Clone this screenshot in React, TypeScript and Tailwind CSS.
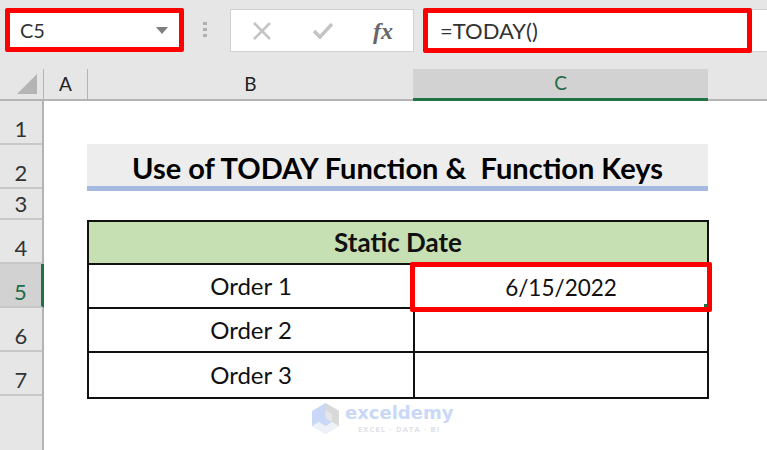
const rowHeads = [
  { label: "1", h: "h-[44px]" },
  { label: "2", h: "h-[44px]" },
  { label: "3", h: "h-[31px]" },
  { label: "4", h: "h-[44px]" },
  { label: "5", h: "h-[44px]", active: true },
  { label: "6", h: "h-[44px]" },
  { label: "7", h: "h-[44px]" },
];

const orders = ["Order 1", "Order 2", "Order 3"];

function Watermark() {
  return (
    <div className="absolute left-[312px] top-[403px] flex items-start gap-[6px]">
      <svg width="27" height="31" viewBox="0 0 27 31">
        <path d="M13.5 0 L27 8 V23 L13.5 31 L0 23 V8 Z" fill="#c9d8f7" />
        <path d="M13.5 0 L27 8 V23 L20 19 V11 L13.5 7 Z" fill="#d9d9d9" />
        <path d="M13.5 7 L20 11 V19 L13.5 15 Z" fill="#e6e6e6" />
        <path d="M0 23 L7 19 L13.5 23 L20 19 L27 23 L13.5 31 Z" fill="#eef2f8" />
      </svg>
      <div className="flex flex-col items-center">
        <span className="text-[18px] leading-[20px] font-bold text-[#c9d8f7] font-['DejaVu_Sans']">exceldemy</span>
        <span className="text-[7.5px] leading-[10px] mt-[1px] font-bold tracking-[1.2px] text-[#dde1e8] font-['Open_Sans']">EXCEL · DATA · BI</span>
      </div>
    </div>
  );
}

export default function App() {
  return (
    <div className="relative w-[767px] h-[450px] overflow-hidden bg-white font-['Lato',sans-serif] text-[#111]">
      {/* formula bar */}
      <div className="flex h-[69px] bg-[#e6e6e6] pt-[8px] items-start">
        <div className="ml-[5px] w-[179px] h-[44px] border-[5px] border-[#ff0000] rounded-[2px] bg-white flex items-center justify-between pl-[10px] pr-[11px]">
          <span className="text-[20px] text-[#333]">C5</span>
          <svg width="12" height="7" viewBox="0 0 12 7"><path d="M0 0 H12 L6 7 Z" fill="#7f7f7f" /></svg>
        </div>
        <div className="ml-[19px] mt-[14px] flex flex-col gap-[3px]">
          <div className="w-[4px] h-[3px] bg-[#b0b0b0]" />
          <div className="w-[4px] h-[3px] bg-[#b0b0b0]" />
          <div className="w-[4px] h-[3px] bg-[#b0b0b0]" />
        </div>
        <div className="ml-[23px] mt-[1px] w-[184px] h-[43px] bg-white border border-[#d2d2d2] flex items-center">
          <svg className="ml-[21px]" width="20" height="18" viewBox="0 0 20 18">
            <path d="M2 1 L18 17 M18 1 L2 17" stroke="#c4c4c4" strokeWidth="2.6" />
          </svg>
          <svg className="ml-[40px]" width="22" height="18" viewBox="0 0 22 18">
            <path d="M2 9 L8 15 L20 2" stroke="#c4c4c4" strokeWidth="3.4" fill="none" />
          </svg>
          <span className="ml-[39px] text-[24px] leading-none italic font-bold text-[#666] font-['Liberation_Serif']">fx</span>
        </div>
        <div className="ml-[9px] w-[329px] h-[45px] border-[5px] border-[#ff0000] rounded-[2px] bg-white flex items-center pl-[12px]">
          <span className="text-[22px] text-[#333]">=TODAY()</span>
        </div>
        <div className="flex-1 mt-[1px] h-[43px] bg-white border-y border-[#d2d2d2]" />
      </div>

      {/* column headers */}
      <div className="flex h-[32px] bg-[#e6e6e6] border-b-2 border-[#b4b4b4] text-[19px] text-[#222]">
        <div className="w-[44px] border-r border-[#b4b4b4] flex items-end justify-end pr-[6px] pb-[5px]">
          <svg width="20" height="20" viewBox="0 0 20 20"><path d="M20 0 V20 H0 Z" fill="#b4b4b4" /></svg>
        </div>
        <div className="w-[44px] border-r border-[#b4b4b4] flex items-center justify-center">A</div>
        <div className="w-[325px] flex items-center justify-center">B</div>
        <div className="w-[295px] bg-[#d2d2d2] border-b-[3px] border-[#217346] mb-[-2px] flex items-center justify-center text-[#216b47]">C</div>
        <div className="flex-1" />
      </div>

      {/* sheet */}
      <div className="flex">
        <div className="w-[44px] h-[349px] bg-[#e6e6e6] border-r-2 border-[#b4b4b4] flex flex-col text-[22px] text-[#333]">
          {rowHeads.map((r) => (
            <div
              key={r.label}
              className={`${r.h} shrink-0 border-b-2 border-[#c8c8c8] flex items-end justify-center leading-[29px] ${r.active ? "bg-[#d2d2d2] border-r-[3px] border-r-[#217346] mr-[-2px] text-[#216b47]" : ""}`}
            >
              {r.label}
            </div>
          ))}
        </div>

        <div className="pl-[43px] pt-[43px] w-[664px] shrink-0">
          <div className="h-[47px] w-[621px] bg-[#ededed] border-b-[5px] border-[#a6b9e0] flex items-center justify-center pt-[6px] text-[29px] font-bold text-[#000]">
            Use of TODAY Function &amp;&nbsp; Function Keys
          </div>

          <div className="mt-[29px] w-[622px] border-2 border-[#111] text-[24px]">
            <div className="h-[43px] bg-[#c6e0b4] border-b-2 border-[#111] flex items-center justify-center font-bold text-[26px]">
              Static Date
            </div>
            {orders.map((o, i) => (
              <div key={o} className={`grid grid-cols-[326px_1fr] h-[44px] ${i < 2 ? "border-b-2 border-[#111]" : ""}`}>
                <div className="border-r-2 border-[#111] flex items-center justify-center">{o}</div>
                <div className="flex items-center justify-center pt-[3px] text-[22.5px]">{i === 0 ? "6/15/2022" : ""}</div>
              </div>
            ))}
          </div>
        </div>
      </div>

      {/* selected cell outline */}
      <div className="absolute left-[410px] top-[262px] w-[302px] h-[50px] border-[5px] border-[#ff0000] rounded-[2px]">
        <div className="absolute right-0 bottom-0 w-[3px] h-[3px] bg-[#217346]" />
      </div>

      <Watermark />
    </div>
  );
}
